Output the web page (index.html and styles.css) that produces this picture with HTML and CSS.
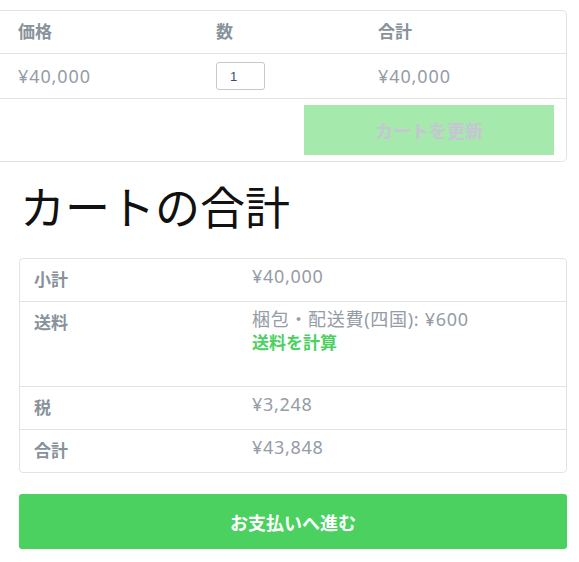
FILE: index.html
```html
<!DOCTYPE html>
<html lang="ja">
<head>
  <meta charset="UTF-8">
  <meta name="viewport" content="width=device-width, initial-scale=1.0">
  <title>カート</title>
  <link rel="stylesheet" href="styles.css">
</head>
<body>
  <!-- カートの商品 -->
  <div class="cart-box">
    <table class="cart-table">
      <thead>
        <tr>
          <th class="col-price">価格</th>
          <th class="col-qty">数</th>
          <th class="col-subtotal">合計</th>
        </tr>
      </thead>
      <tbody>
        <tr>
          <td class="col-price">¥40,000</td>
          <td class="col-qty"><input type="number" class="qty-input" value="1" min="0"></td>
          <td class="col-subtotal">¥40,000</td>
        </tr>
        <tr>
          <td class="actions" colspan="3">
            <button class="update-cart-btn" disabled>カートを更新</button>
          </td>
        </tr>
      </tbody>
    </table>
  </div>

  <!-- カートの合計 -->
  <div class="cart-totals">
    <h2>カートの合計</h2>
    <div class="totals-box">
      <table class="totals-table">
        <tr>
          <th>小計</th>
          <td>¥40,000</td>
        </tr>
        <tr class="shipping">
          <th>送料</th>
          <td>
            <div>梱包・配送費(四国): ¥600</div>
            <a href="#" class="calc-shipping">送料を計算</a>
          </td>
        </tr>
        <tr>
          <th>税</th>
          <td>¥3,248</td>
        </tr>
        <tr>
          <th>合計</th>
          <td>¥43,848</td>
        </tr>
      </table>
    </div>
    <button class="checkout-btn">お支払いへ進む</button>
  </div>
</body>
</html>
```

FILE: styles.css
```css
body {
  font-family: "Noto Sans", "Noto Sans CJK JP", sans-serif;
  margin: 0;
  padding: 0;
  background-color: #fff;
}

.cart-box {
  margin-top: 10px;
  width: 566px;
  border: 1px solid #e3e3e3;
  border-left: none;
  border-radius: 0 5px 5px 0;
}

.cart-table {
  width: 100%;
  border-collapse: collapse;
}

.cart-table th {
  text-align: left;
  font-size: 17px;
  font-weight: bold;
  color: #87929a;
  height: 38px;
  padding: 0 0 4px 18px;
  border-bottom: 1px solid #e3e3e3;
}

.cart-table td {
  font-size: 18px;
  letter-spacing: 0.9px;
  color: #959ca6;
  height: 44px;
  padding: 0 0 0 18px;
  border-bottom: 1px solid #e3e3e3;
}

.cart-table .col-price {
  width: 180px;
}

.cart-table .col-qty {
  width: 144px;
}

.qty-input {
  width: 49px;
  height: 28px;
  box-sizing: border-box;
  border: 1px solid #c8c8c8;
  border-radius: 3px;
  padding: 0 0 0 13px;
  font-family: "Liberation Sans", sans-serif;
  font-size: 13px;
  color: #3a4a6a;
  vertical-align: middle;
  -moz-appearance: textfield;
}

.qty-input::-webkit-inner-spin-button,
.qty-input::-webkit-outer-spin-button {
  -webkit-appearance: none;
  margin: 0;
}

.cart-table td.actions {
  border-bottom: none;
  text-align: right;
  height: auto;
  letter-spacing: 0;
  padding: 6px 12px 6px 0;
}

.update-cart-btn {
  width: 250px;
  height: 50px;
  border: none;
  background-color: #a6e9ad;
  color: #c7c4d5;
  font-family: inherit;
  font-size: 18px;
  font-weight: bold;
  vertical-align: top;
}

.cart-totals {
  padding: 0 12px 0 19px;
}

.cart-totals h2 {
  font-family: "Noto Sans CJK JP", sans-serif;
  font-size: 45px;
  font-weight: normal;
  color: #111;
  line-height: 1;
  margin: 21px 0 0 1px;
  height: 75px;
}

.totals-box {
  width: 546px;
  border: 1px solid #e3e3e3;
  border-radius: 4px;
}

.totals-table {
  width: 100%;
  border-collapse: collapse;
}

.totals-table tr {
  border-bottom: 1px solid #e3e3e3;
}

.totals-table tr:last-child {
  border-bottom: none;
}

.totals-table th {
  width: 205px;
  text-align: left;
  vertical-align: top;
  font-size: 17px;
  font-weight: bold;
  color: #87929a;
  line-height: 24px;
  padding: 9px 0 9px 14px;
}

.totals-table td {
  vertical-align: top;
  font-size: 18px;
  letter-spacing: 0.7px;
  color: #959ca6;
  line-height: 24px;
  padding: 5px 0 13px 13px;
}

.totals-table .shipping td {
  padding-bottom: 33px;
}

.calc-shipping {
  display: block;
  margin-top: 2px;
  color: #4ad15f;
  font-size: 17px;
  font-weight: bold;
  letter-spacing: 0;
  text-decoration: none;
  line-height: 20px;
}

.checkout-btn {
  display: block;
  width: 548px;
  height: 55px;
  margin-top: 21px;
  border: none;
  border-radius: 3px;
  background-color: #4ad15f;
  color: #fff;
  font-family: inherit;
  font-size: 18px;
  font-weight: bold;
}
```
